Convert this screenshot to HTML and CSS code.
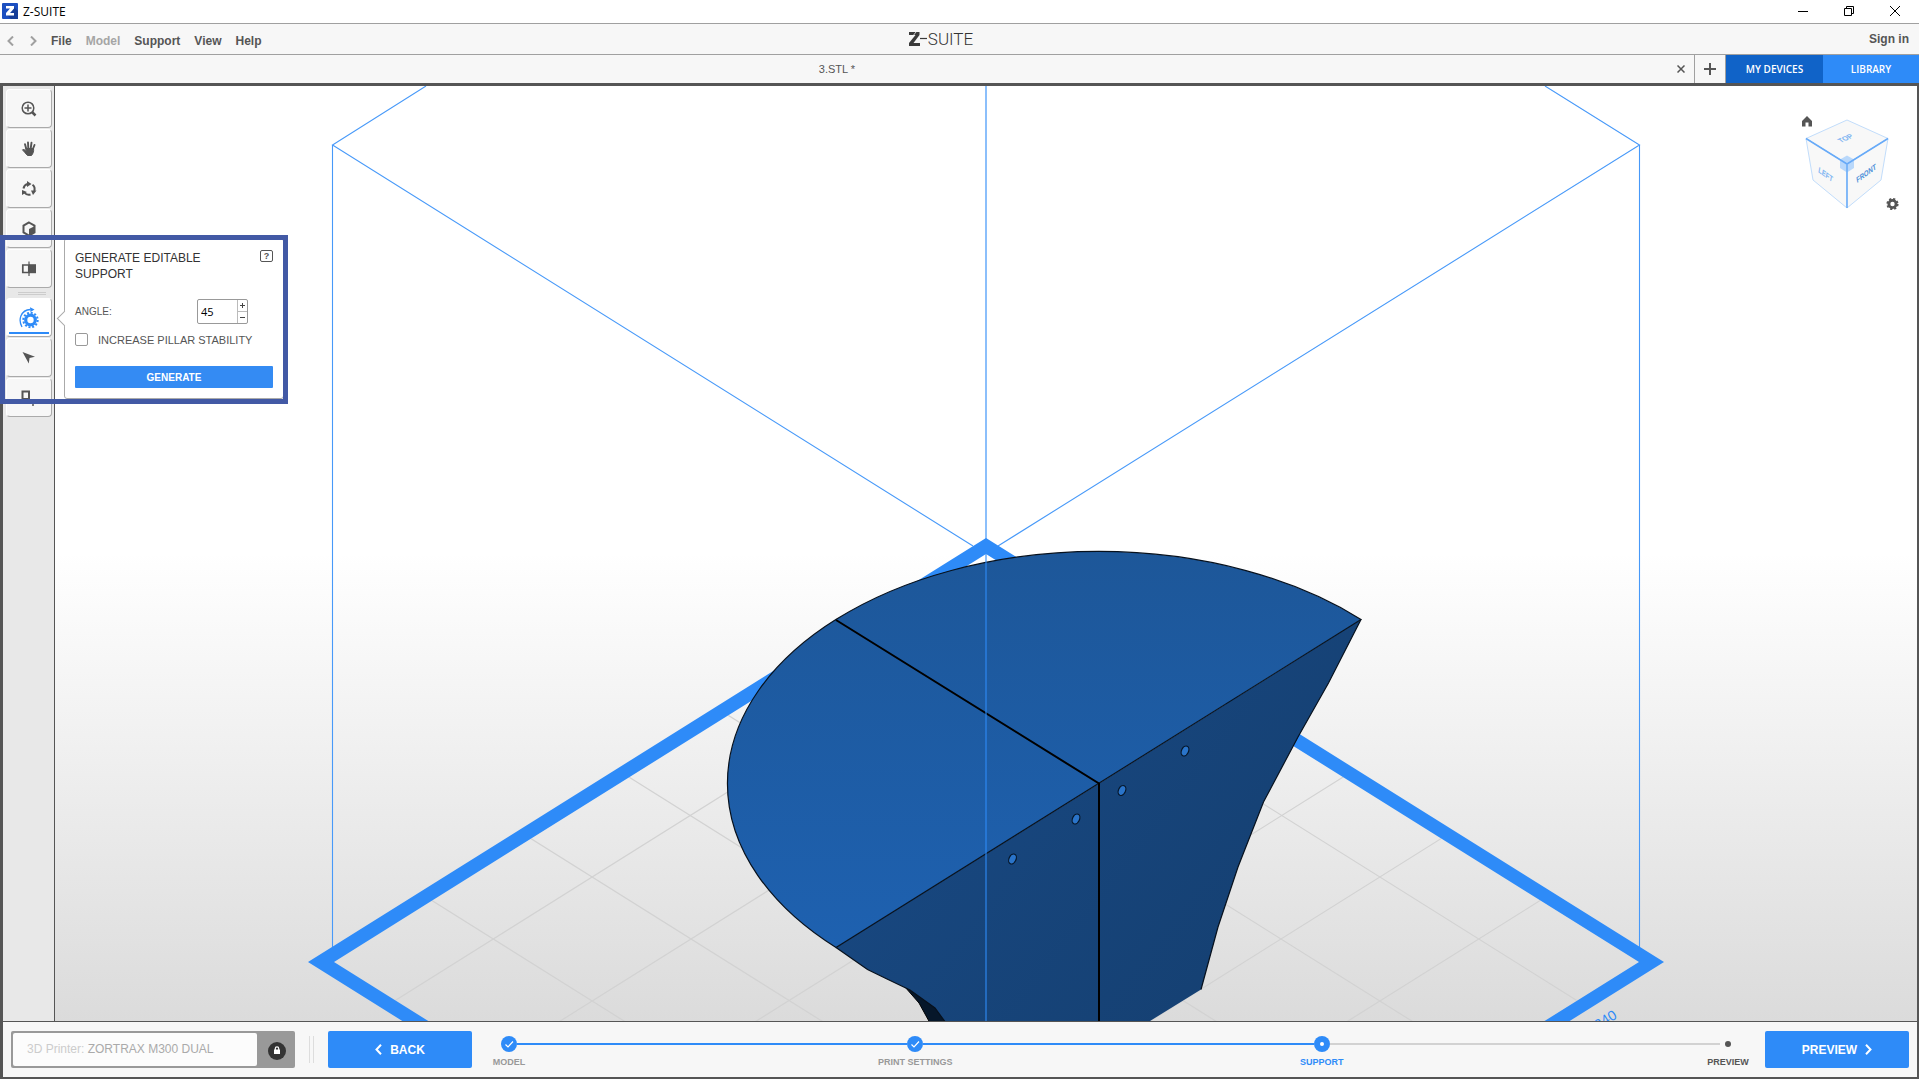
FILE: index.html
```html
<!DOCTYPE html>
<html lang="en">
<head>
    <meta charset="UTF-8">
    <meta name="viewport" content="width=device-width, initial-scale=1.0">
    <title>Z-SUITE</title>
    <link rel="stylesheet" href="styles.css">
</head>
<body>

    <header class="titlebar">
        <svg class="app-icon" width="16" height="16" viewBox="0 0 16 16">
            <rect width="16" height="16" rx="1" fill="#1c4fc0"/>
            <path d="M8 12l4-8 4 4v8H9l-4-4z" fill="#163d97"/>
            <path d="M4 3h8v2.500L8 10h4v2.500H4V10l4-4.500H4z" fill="#fff"/>
        </svg>
        <span class="app-name">Z-SUITE</span>
        <div class="window-buttons">
            <button aria-label="Minimize"><svg width="12" height="12" viewBox="0 0 12 12"><path d="M1 6.500h10"/></svg></button>
            <button aria-label="Restore"><svg width="12" height="12" viewBox="0 0 12 12"><path d="M1.500 3.500h7v7h-7zM3.500 3V1.500h7v7H9"/></svg></button>
            <button aria-label="Close"><svg width="12" height="12" viewBox="0 0 12 12"><path d="M1 1l10 10M11 1L1 11"/></svg></button>
        </div>
    </header>

    <nav class="menubar">
        <div class="menu">
            <button class="arrow" aria-label="Undo"><svg width="8" height="10" viewBox="0 0 8 10"><path d="M6 0.500L1.500 5 6 9.500"/></svg></button>
            <button class="arrow" aria-label="Redo"><svg width="8" height="10" viewBox="0 0 8 10"><path d="M2 0.500L6.500 5 2 9.500"/></svg></button>
            <button>File</button>
            <button disabled>Model</button>
            <button>Support</button>
            <button>View</button>
            <button>Help</button>
        </div>
        <div class="logo">
            <svg width="18" height="14" viewBox="0 0 18 14">
                <path d="M0 0h10.500v3L4.500 11H11v3H0v-3l6.500-8H0z" fill="#3a3a3a"/>
                <path d="M0 9L7 0" stroke="#f7f7f7" stroke-width="0.800"/>
                <path d="M11 6.500H18" stroke="#3a3a3a" stroke-width="1.200"/>
            </svg>
            <span>SUITE</span>
        </div>
        <a class="sign-in" href="#">Sign in</a>
    </nav>

    <div class="tabs">
        <div class="tab">
            <span class="tab-name">3.STL *</span>
            <button class="tab-close" aria-label="Close tab"><svg width="8" height="8" viewBox="0 0 8 8"><path d="M0.500 0.500l7 7M7.500 0.500l-7 7"/></svg></button>
        </div>
        <button class="tab-add" aria-label="New tab"><svg width="12" height="12" viewBox="0 0 12 12"><path d="M6 0v12M0 6h12"/></svg></button>
        <button class="devices">MY DEVICES</button>
        <button class="library">LIBRARY</button>
    </div>

    <main class="workspace">
        <aside class="tools">
            <button class="tool" aria-label="Zoom">
                <svg width="16" height="16" viewBox="0 0 16 16" fill="none" stroke="#555">
                    <circle cx="7" cy="7" r="5.800" stroke-width="1.500"/>
                    <path d="M7 3.500v7M3.500 7h7" stroke-width="1.500"/>
                    <path d="M11 11l3.500 3.500" stroke-width="2.500"/>
                </svg>
            </button>
            <button class="tool" aria-label="Move view">
                <svg width="16" height="16" viewBox="0 0 16 16" fill="none" stroke="#555" stroke-linecap="round">
                    <path d="M5.300 8L4 3.200M7.300 7.500L7 1.500M9.700 7.500l.8-5.800M11.700 8.500L13.500 4" stroke-width="1.900"/>
                    <path d="M5 7.500h7.500c.5 3-.5 5-2 7H6.500C4.500 12.500 3 10.500 1.500 8.800L3 8.500l2.500 2z" fill="#555" stroke-width="1"/>
                </svg>
            </button>
            <button class="tool" aria-label="Rotate view">
                <svg width="16" height="16" viewBox="0 0 16 16" fill="none" stroke="#555" stroke-width="2">
                    <path d="M2.500 7.500A5.500 5.500 0 0 1 6.500 3M11.500 3.800A5.500 5.500 0 0 1 13.200 10M9.500 13.500A5.500 5.500 0 0 1 3.500 11.500"/>
                    <path d="M6 0l4.500 3L6 6zM10 9.500h5.500L12 14zM1 14V9l5 2z" fill="#555" stroke="none"/>
                </svg>
            </button>
            <button class="tool" aria-label="View options">
                <svg width="16" height="16" viewBox="0 0 16 16">
                    <path d="M8 1.500l5.500 3.200v6.600L8 14.500l-5.500-3.200V4.700z" fill="none" stroke="#555" stroke-width="2"/>
                    <path d="M8 8l5-2.500V12l-5 2.500z" fill="#555"/>
                </svg>
            </button>
            <button class="tool" aria-label="Split view">
                <svg width="16" height="16" viewBox="0 0 16 16">
                    <path d="M1.800 4h6v7.500h-6z" fill="none" stroke="#555" stroke-width="1.700"/>
                    <path d="M8 3.200h7v9H8z" fill="#555"/>
                    <path d="M8 0.500v14.500" stroke="#555" stroke-width="1.200"/>
                </svg>
            </button>
            <div class="divider"></div>
            <button class="tool active" aria-label="Generate support">
                <svg width="20" height="22" viewBox="0 0 20 22" fill="none" stroke="#2e8bf8">
                    <circle cx="11.500" cy="13" r="4.800" stroke-width="3.200"/>
                    <circle cx="11.500" cy="13" r="7.200" stroke-width="2" stroke-dasharray="2 1.770"/>
                    <path d="M3 20C-1 13 1.500 3 11.500 2.500" stroke-width="1.300"/>
                    <path d="M11 0.300L15.500 2.500l-4 2.500z" fill="#2e8bf8" stroke="none"/>
                </svg>
            </button>
            <button class="tool" aria-label="Select support">
                <svg width="16" height="16" viewBox="0 0 16 16"><path d="M1.500 2L14 6.800 8.500 8 7.800 13.500z" fill="#555"/></svg>
            </button>
            <button class="tool" aria-label="Add support">
                <svg width="16" height="18" viewBox="0 0 16 18" fill="none" stroke="#555">
                    <path d="M1.500 2.500h6.500v7.500H1.500z" stroke-width="2"/>
                    <path d="M12 11v6M9 14h6" stroke-width="1.500"/>
                </svg>
            </button>
        </aside>

        <section class="viewport">
            <svg class="scene" viewBox="55 86 1862 935" preserveAspectRatio="xMidYMid slice">
                <defs>
                    <linearGradient id="topFace" x1="0" y1="0" x2="0" y2="1">
                        <stop offset="0" stop-color="#1d5799"/>
                        <stop offset="1" stop-color="#1e61b0"/>
                    </linearGradient>
                    <linearGradient id="sideFace" x1="0" y1="0" x2="1" y2="0.600">
                        <stop offset="0" stop-color="#194a85"/>
                        <stop offset="1" stop-color="#154072"/>
                    </linearGradient>
                    <clipPath id="bed"><path d="M986 554L1639 962 986 1370 334 962z"/></clipPath>
                </defs>

                <!-- bed grid -->
                <g clip-path="url(#bed)" stroke="#d2d2d2" stroke-width="1.200">
                    <path d="M286 191L1686 1069M286 315L1686 1193M286 438L1686 1316M286 562L1686 1440M286 685L1686 1563M286 809L1686 1687"/>
                    <path d="M1686 191L286 1069M1686 315L286 1193M1686 438L286 1316M1686 562L286 1440M1686 685L286 1563M1686 809L286 1687"/>
                </g>

                <!-- build volume -->
                <path d="M426 86L332.500 145L973 546M1545 86L1639.500 145L998 546M332.500 145V950M1639.500 145V950" fill="none" stroke="#4799f9" stroke-width="1.100"/>
                <path d="M986 538L1664 962 986 1386 308 962zM986 554L334 962 986 1370 1639 962z" fill="#2e8bf8" fill-rule="evenodd"/>
                <text x="1598" y="1030" transform="rotate(-32 1598 1030)" class="bed-size">240</text>

                <!-- model -->
                <path d="M905 987L919 1003 930 1023H950L935 1006z" fill="#06172a" stroke="#000"/>
                <path d="M836 947.500L1099 783.500 1361 619.500 1328.500 683 1298 737 1263.500 802 1238 867 1218 927 1201 989.500 1150 1021V1023H946L935 1008 910 990 887 979 867.500 969.500z" fill="url(#sideFace)"/>
                <path d="M1361 619.500L1328.500 683 1298 737 1263.500 802 1238 867 1218 927 1201 989.500M946 1023L935 1008 910 990 887 979 867.500 969.500 836 947.500" fill="none" stroke="#07111d" stroke-width="1.200"/>
                <path d="M836 947.500A371 232 0 0 1 1361 619.500z" fill="url(#topFace)" stroke="#07111d" stroke-width="1.200"/>
                <path d="M836 620L1099 783.500V1023" fill="none" stroke="#000" stroke-width="2"/>
                <g fill="#2a74c9" stroke="#06172a" stroke-width="1.200">
                    <ellipse cx="1185" cy="751" rx="3.500" ry="5.200" transform="rotate(25 1185 751)"/>
                    <ellipse cx="1122" cy="790.500" rx="3.500" ry="5.200" transform="rotate(25 1122 790.500)"/>
                    <ellipse cx="1076" cy="819" rx="3.500" ry="5.200" transform="rotate(25 1076 819)"/>
                    <ellipse cx="1012.500" cy="859" rx="3.500" ry="5.200" transform="rotate(25 1012.500 859)"/>
                </g>
                <path d="M986 86V1021" stroke="#2e8bf8" stroke-width="2" opacity="0.550"/>
            </svg>

            <svg class="view-cube" width="110" height="100" viewBox="1796 112 110 100">
                <g fill="#f8f8f8" stroke="#c2ddfb">
                    <path d="M1847 120L1888 138.500 1847 164 1806 138.500z"/>
                    <path d="M1806 138.500L1847 164V208L1813 180z"/>
                    <path d="M1888 138.500L1847 164V208L1881 180z"/>
                </g>
                <path d="M1847 155.500l7 4V168l-7 4.500-7-4.500v-8.500z" fill="#b9d8fb"/>
                <path d="M1806 138.500L1847 164 1888 138.500M1847 164V208" fill="none" stroke="#67aaf8" stroke-width="1.500"/>
                <g class="cube-text">
                    <text x="0" y="0" transform="translate(1841 143) rotate(-25) skewX(25)">TOP</text>
                    <text x="0" y="0" transform="translate(1818 172) rotate(36) skewX(25)">LEFT</text>
                    <text x="0" y="0" class="front" transform="translate(1857 183) rotate(-36) skewX(-25)">FRONT</text>
                </g>
                <path d="M1802 121l5-5 5 5v5.500h-3.500v-4h-3v4H1802z" fill="#555"/>
                <circle cx="1892.500" cy="204" r="3.600" fill="none" stroke="#555" stroke-width="2.800"/>
                <circle cx="1892.500" cy="204" r="5.200" fill="none" stroke="#555" stroke-width="1.800" stroke-dasharray="2.200 1.884"/>
            </svg>
        </section>

        <form class="panel">
            <div class="panel-head">
                <h2>GENERATE EDITABLE SUPPORT</h2>
                <button type="button" class="help">?</button>
            </div>
            <div class="angle-row">
                <label for="angle">ANGLE:</label>
                <div class="spinner">
                    <input type="text" id="angle" value="45">
                    <div class="spinner-buttons">
                        <button type="button" aria-label="Increase"><svg width="7" height="7" viewBox="0 0 7 7"><path d="M3.500 1v5M1 3.500h5"/></svg></button>
                        <button type="button" aria-label="Decrease"><svg width="7" height="7" viewBox="0 0 7 7"><path d="M1 3.500h5"/></svg></button>
                    </div>
                </div>
            </div>
            <div class="check-row">
                <input type="checkbox" id="stability">
                <label for="stability">INCREASE PILLAR STABILITY</label>
            </div>
            <button type="button" class="generate">GENERATE</button>
        </form>
        <div class="highlight"></div>
    </main>

    <footer class="bottombar">
        <div class="printer">
            <div class="printer-name"><span>3D Printer:</span> ZORTRAX M300 DUAL</div>
            <button class="lock" aria-label="Lock printer">
                <svg width="18" height="18" viewBox="0 0 18 18">
                    <circle cx="9" cy="9" r="9" fill="#333"/>
                    <path d="M6 7.500h6V12H6z" fill="#fff"/>
                    <path d="M7.300 8V6.500a1.700 1.700 0 0 1 3.400 0V8" fill="none" stroke="#fff" stroke-width="1.200"/>
                </svg>
            </button>
        </div>
        <div class="grip"></div>
        <button class="main-button">
            <svg width="7" height="11" viewBox="0 0 7 11"><path d="M6 0.800L1.500 5.500 6 10.200"/></svg>
            BACK
        </button>
        <ol class="steps">
            <li class="done">
                <div class="step">
                    <svg class="dot" width="16" height="16" viewBox="0 0 16 16"><circle cx="8" cy="8" r="8" fill="#2e8bf8"/><path d="M4.500 8.500L7 11l5-5.500" fill="none" stroke="#fff" stroke-width="1.200"/></svg>
                    <span>MODEL</span>
                </div>
            </li>
            <li class="done">
                <div class="step">
                    <svg class="dot" width="16" height="16" viewBox="0 0 16 16"><circle cx="8" cy="8" r="8" fill="#2e8bf8"/><path d="M4.500 8.500L7 11l5-5.500" fill="none" stroke="#fff" stroke-width="1.200"/></svg>
                    <span>PRINT SETTINGS</span>
                </div>
            </li>
            <li class="current">
                <div class="step">
                    <svg class="dot" width="16" height="16" viewBox="0 0 16 16"><circle cx="8" cy="8" r="8" fill="#2e8bf8"/><circle cx="8" cy="8" r="2" fill="#fff"/></svg>
                    <span>SUPPORT</span>
                </div>
            </li>
            <li class="next">
                <div class="step">
                    <svg class="dot" width="16" height="16" viewBox="0 0 16 16"><circle cx="8" cy="8" r="3" fill="#555"/></svg>
                    <span>PREVIEW</span>
                </div>
            </li>
        </ol>
        <button class="main-button">
            PREVIEW
            <svg width="7" height="11" viewBox="0 0 7 11"><path d="M1 0.800L5.500 5.500 1 10.200"/></svg>
        </button>
    </footer>

</body>
</html>
```
FILE: styles.css
```css
* {
    box-sizing: border-box;
}
body {
    margin: 0;
    height: 100vh;
    display: flex;
    flex-direction: column;
    overflow: hidden;
    font-family: "Liberation Sans", Arial, sans-serif;
    font-size: 12px;
    color: #555;
    background: #f7f7f7;
}
button {
    font: inherit;
    color: inherit;
    background: none;
    border: 0;
    padding: 0;
    display: flex;
    align-items: center;
    justify-content: center;
}
svg {
    display: block;
    flex: none;
}

/* window title */
.titlebar {
    display: flex;
    align-items: center;
    height: 24px;
    padding: 0 1px 1px 2px;
    background: #fff;
    border-bottom: 1px solid #a0a0a0;
}
.app-name {
    margin-left: 5px;
    font-family: "Open Sans", sans-serif;
    font-size: 12px;
    color: #000;
}
.window-buttons {
    display: flex;
    margin-left: auto;
}
.window-buttons button {
    width: 46px;
    height: 20px;
}
.window-buttons svg {
    fill: none;
    stroke: #000;
}

/* menu */
.menubar {
    display: grid;
    grid-template-columns: 1fr auto 1fr;
    align-items: center;
    height: 31px;
    padding: 0 10px 0 7px;
    border-bottom: 1px solid #a0a0a0;
}
.menu {
    display: flex;
    gap: 14px;
    padding-top: 4px;
    font-weight: bold;
}
.menu button:disabled {
    color: #a5a5a5;
}
.menu .arrow svg {
    fill: none;
    stroke: #a0a0a0;
    stroke-width: 2;
}
.logo {
    display: flex;
    align-items: center;
    gap: 1px;
    margin-right: 34px;
    font-family: Roboto, sans-serif;
    font-weight: 300;
    font-size: 17px;
    color: #333;
}
.sign-in {
    justify-self: end;
    color: #555;
    font-weight: bold;
    text-decoration: none;
}

/* tabs */
.tabs {
    display: flex;
    height: 31px;
    border-bottom: 3px solid #555;
}
.tab {
    flex: 1;
    display: flex;
    align-items: center;
    border-right: 1px solid #a0a0a0;
}
.tab-name {
    flex: 1;
    padding-left: 6px;
    text-align: center;
    font-size: 11px;
}
.tab-close {
    width: 26px;
    height: 27px;
}
.tab-add {
    width: 31px;
    border-right: 1px solid #a0a0a0;
}
.tab-close svg {
    stroke: #555;
    stroke-width: 1.500;
}
.tab-add svg {
    stroke: #555;
    stroke-width: 2;
}
.devices,
.library {
    width: 97px;
    font-family: "Open Sans", sans-serif;
    font-size: 10px;
    font-weight: 600;
    color: #fff;
}
.devices {
    background: #1063c8;
}
.library {
    width: 96px;
    background: #2e8bf8;
}

/* workspace */
.workspace {
    position: relative;
    flex: 1;
    display: flex;
    min-height: 0;
    border-left: 3px solid #555;
    border-right: 2px solid #555;
}
.tools {
    display: flex;
    flex-direction: column;
    gap: 1px;
    width: 52px;
    padding: 3px 2px 0 3px;
    background: #e8e8e8;
    border-right: 1px solid #555;
}
.tool {
    height: 39px;
    background: #f7f7f7;
    border: 1px solid #fff;
    border-right-color: #aaa;
    border-bottom: 1px solid #aaa;
    border-radius: 4px;
}
.tool.active {
    position: relative;
    background: #fff;
}
.tool.active::after {
    content: "";
    position: absolute;
    left: 2px;
    right: 2px;
    bottom: 2px;
    height: 2px;
    background: #2e8bf8;
}
.divider {
    height: 3px;
    margin: 3px 6px 2px 12px;
    border-top: 1px solid #ccc;
    border-bottom: 1px solid #ccc;
}
.viewport {
    position: relative;
    flex: 1;
    min-width: 0;
    background: linear-gradient(#fff 50%, #dbdbdb);
}
.scene {
    width: 100%;
    height: 100%;
}
.bed-size {
    font-size: 14px;
    fill: #2e8bf8;
}
.view-cube {
    position: absolute;
    top: 26px;
    right: 11px;
}
.cube-text {
    font-size: 7px;
    font-weight: bold;
    fill: #7db4f2;
}
.cube-text .front {
    fill: #4c8fd8;
}

/* support panel */
.panel {
    position: absolute;
    left: 61px;
    top: 152px;
    width: 220px;
    padding: 11px 10px 10px;
    background: #fff;
    border: 1px solid #aaa;
    border-radius: 3px;
}
.panel::before {
    content: "";
    position: absolute;
    left: -6px;
    top: 74px;
    width: 10px;
    height: 10px;
    background: #fff;
    border-left: 1px solid #aaa;
    border-bottom: 1px solid #aaa;
    transform: rotate(45deg);
}
.panel-head {
    display: flex;
    align-items: flex-start;
    justify-content: space-between;
}
.panel h2 {
    width: 140px;
    margin: 0;
    font-size: 12px;
    line-height: 16px;
    font-weight: normal;
    color: #333;
}
.help {
    width: 13px;
    height: 12px;
    border: 1px solid #555;
    border-radius: 2px;
    font-size: 9px;
    font-weight: bold;
}
.angle-row {
    display: flex;
    align-items: center;
    justify-content: space-between;
    margin-top: 17px;
    padding-right: 25px;
    font-size: 10px;
}
.spinner {
    display: flex;
    width: 51px;
    height: 25px;
    border: 1px solid #999;
    border-radius: 2px;
}
.spinner input {
    flex: 1;
    min-width: 0;
    padding: 0 0 0 3px;
    border: 0;
    background: none;
    font-family: "Open Sans", sans-serif;
    font-size: 11px;
    color: #000;
}
.spinner-buttons {
    display: flex;
    flex-direction: column;
    width: 10px;
    border-left: 1px solid #bbb;
}
.spinner-buttons button {
    flex: 1;
}
.spinner-buttons button + button {
    border-top: 1px solid #bbb;
}
.spinner-buttons svg {
    stroke: #444;
}
.check-row {
    display: flex;
    align-items: center;
    gap: 10px;
    margin-top: 9px;
    font-size: 11px;
}
.check-row input {
    appearance: none;
    width: 13px;
    height: 13px;
    margin: 0;
    border: 1px solid #999;
    border-radius: 2px;
    background: #fff;
}
.generate {
    width: 100%;
    height: 22px;
    margin-top: 20px;
    border-radius: 1px;
    background: #348bf3;
    color: #fff;
    font-size: 10px;
    font-weight: bold;
}
.highlight {
    position: absolute;
    left: -3px;
    top: 149px;
    width: 288px;
    height: 169px;
    border: 5px solid #4259a5;
    pointer-events: none;
}

/* bottom bar */
.bottombar {
    display: flex;
    align-items: center;
    height: 58px;
    padding: 0 8px;
    border: 1px solid #555;
    border-width: 1px 2px 2px 3px;
}
.printer {
    display: flex;
    width: 284px;
    height: 37px;
    padding: 2px;
    background: #999;
    border-radius: 2px;
}
.printer-name {
    flex: 1;
    padding-left: 14px;
    background: #fcfcfc;
    border-radius: 2px;
    line-height: 33px;
    color: #aaa;
}
.printer-name span {
    color: #ccc;
}
.lock {
    width: 36px;
    padding: 2px 0 0 3px;
}
.grip {
    width: 5px;
    height: 27px;
    margin: 0 14px;
    border: 1px solid #ddd;
    border-width: 0 1px;
}
.main-button {
    width: 144px;
    height: 37px;
    gap: 8px;
    border-radius: 2px;
    background: #2e8bf8;
    color: #fff;
    font-weight: bold;
}
.main-button svg {
    fill: none;
    stroke: #fff;
    stroke-width: 2;
}
.steps {
    flex: 1;
    display: flex;
    margin: 0 29px;
    padding: 3px 0 0;
    list-style: none;
}
.steps li {
    flex: 1;
    display: flex;
}
.steps li::after {
    content: "";
    flex: 1;
    height: 2px;
    margin-top: 7px;
    background: #d2d2d2;
}
.steps .done::after {
    background: #2e8bf8;
}
.steps .next {
    flex: none;
}
.steps .next::after {
    display: none;
}
.step {
    display: flex;
    flex-direction: column;
    align-items: center;
    gap: 5px;
    width: 16px;
    color: #999;
    font-size: 9px;
    line-height: 10px;
    font-weight: bold;
    white-space: nowrap;
}
.current .step {
    color: #2e8bf8;
}
.next .step {
    color: #555;
}
```
